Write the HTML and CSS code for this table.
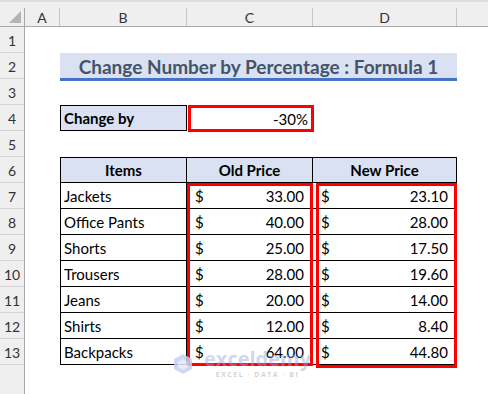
FILE: index.html
```html
<!DOCTYPE html>
<html>
<head>
<meta charset="utf-8">
<link rel="stylesheet" href="styles.css">
</head>
<body>
<div class="app">
  <div class="colheads">
    <div class="corner"><span class="tri"></span></div>
    <div class="ch">A</div>
    <div class="ch">B</div>
    <div class="ch">C</div>
    <div class="ch">D</div>
    <div class="ch last"></div>
  </div>
  <div class="main">
    <div class="rowheads">
      <div class="rh">1</div><div class="rh">2</div><div class="rh">3</div><div class="rh">4</div>
      <div class="rh">5</div><div class="rh">6</div><div class="rh">7</div><div class="rh">8</div>
      <div class="rh">9</div><div class="rh">10</div><div class="rh">11</div><div class="rh">12</div>
      <div class="rh">13</div>
    </div>
    <div class="sheet">
      <div class="title">Change Number by Percentage : Formula 1</div>

      <div class="cell lbl r4">Change by</div>
      <div class="cell pct r4">-30%</div>

      <div class="cell th cb r6 first">Items</div>
      <div class="cell th cc r6">Old Price</div>
      <div class="cell th cd r6">New Price</div>

      <div class="cell cb r7">Jackets</div><div class="cell cc money r7"><span>$</span><span>33.00</span></div><div class="cell cd money r7"><span>$</span><span>23.10</span></div>
      <div class="cell cb r8">Office Pants</div><div class="cell cc money r8"><span>$</span><span>40.00</span></div><div class="cell cd money r8"><span>$</span><span>28.00</span></div>
      <div class="cell cb r9">Shorts</div><div class="cell cc money r9"><span>$</span><span>25.00</span></div><div class="cell cd money r9"><span>$</span><span>17.50</span></div>
      <div class="cell cb r10">Trousers</div><div class="cell cc money r10"><span>$</span><span>28.00</span></div><div class="cell cd money r10"><span>$</span><span>19.60</span></div>
      <div class="cell cb r11">Jeans</div><div class="cell cc money r11"><span>$</span><span>20.00</span></div><div class="cell cd money r11"><span>$</span><span>14.00</span></div>
      <div class="cell cb r12">Shirts</div><div class="cell cc money r12"><span>$</span><span>12.00</span></div><div class="cell cd money r12"><span>$</span><span>8.40</span></div>
      <div class="cell cb r13">Backpacks</div><div class="cell cc money r13"><span>$</span><span>64.00</span></div><div class="cell cd money r13"><span>$</span><span>44.80</span></div>

      <div class="redbox box-c4"></div>
      <div class="redbox box-c"></div>
      <div class="redbox box-d"></div>

      <div class="watermark">
        <svg class="wm-logo" width="22" height="22" viewBox="0 0 22 22">
          <polygon points="11,1 20,6 20,16 11,21 2,16 2,6" fill="#c7d2f0"/>
          <polygon points="11,6 16,9 16,14 11,17 6,14 6,9" fill="#e3e9f8"/>
        </svg>
        <div class="wm-text">
          <div class="wm-name">exceldemy</div>
          <div class="wm-sub">EXCEL · DATA · BI</div>
        </div>
      </div>
    </div>
  </div>
</div>
</body>
</html>
```

FILE: styles.css
```css
* { box-sizing: border-box; }
html, body { margin: 0; padding: 0; background: #ffffff; }
body { font-family: "Lato", "Open Sans", sans-serif; color: #000; }

.app { width: 488px; height: 394px; overflow: hidden; display: flex; flex-direction: column; }

.colheads {
  height: 27px;
  background: #efefef;
  border-top: 2px solid #dcdcdc;
  border-bottom: 1px solid #a8a8a8;
  display: grid;
  grid-template-columns: 25px 35px 127px 126px 144px 1fr;
  flex: none;
}
.corner { position: relative; border-right: 1px solid #a8a8a8; margin-top: 6px; }
.tri {
  position: absolute; right: 3px; bottom: 3px;
  width: 0; height: 0;
  border-left: 12px solid transparent;
  border-bottom: 12px solid #b4b4b4;
}
.ch {
  margin-top: 6px;
  border-right: 1px solid #c6c6c6;
  display: flex; align-items: center; justify-content: center;
  font-size: 14px; color: #333;
}
.ch.last { border-right: none; }

.main { flex: 1; display: flex; }
.rowheads {
  width: 25px; flex: none;
  background: #efefef;
  border-right: 1px solid #a8a8a8;
  display: flex; flex-direction: column;
}
.rh {
  height: 26px;
  border-bottom: 1px solid #d2d2d2;
  display: flex; align-items: center; justify-content: center;
  font-size: 14px; color: #333;
  padding-top: 2px;
}

.sheet {
  flex: 1;
  position: relative;
  display: grid;
  grid-template-columns: 35px 127px 126px 144px 1fr;
  grid-template-rows: repeat(13, 26px) 1fr;
}

.title {
  grid-row: 2; grid-column: 2 / 5;
  background: #d9e1f2;
  border-bottom: 3px solid #4472c4;
  margin-bottom: -2px;
  display: flex; align-items: center; justify-content: center;
  font-weight: 700; font-size: 19px; color: #44546a;
  padding-top: 1px;
}

.cell {
  display: flex; align-items: flex-end;
  font-size: 15px; line-height: 18px;
  padding: 0 3px 3px 3px;
  white-space: nowrap;
}
.r4 { grid-row: 4; }
.r6 { grid-row: 6; } .r7 { grid-row: 7; } .r8 { grid-row: 8; } .r9 { grid-row: 9; }
.r10 { grid-row: 10; } .r11 { grid-row: 11; } .r12 { grid-row: 12; } .r13 { grid-row: 13; }
.cb { grid-column: 2; border-left: 1px solid #000; border-right: 1px solid #000; border-bottom: 1px solid #000; }
.cc { grid-column: 3; border-right: 1px solid #000; border-bottom: 1px solid #000; }
.cd { grid-column: 4; border-right: 1px solid #000; border-bottom: 1px solid #000; }
.r6 { border-top: 1px solid #000; }

.th { background: #d9e1f2; font-weight: 700; justify-content: center; }

.lbl {
  grid-column: 2;
  background: #d9e1f2;
  border: 1px solid #000;
  font-weight: 700;
}
.pct { grid-column: 3; justify-content: flex-end; padding-right: 5px; }

.money { justify-content: space-between; padding-left: 8px; padding-right: 8px; }

.redbox { border: 3px solid #ff0000; pointer-events: none; }
.box-c4 { grid-row: 4; grid-column: 3; margin-left: 1px; margin-right: -1px; margin-bottom: -1px; }
.box-c { grid-row: 7 / 14; grid-column: 3; margin-bottom: -1px; }
.box-d { grid-row: 7 / 14; grid-column: 4; margin-left: 3px; margin-bottom: -3px; }

.watermark {
  position: absolute; left: 147px; top: 321px;
  display: flex; align-items: center; gap: 10px;
  opacity: 0.85;
}
.wm-text { display: flex; flex-direction: column; align-items: center; }
.wm-name { font-family: "Open Sans", sans-serif; font-weight: 700; font-size: 20px; line-height: 21px; color: rgba(150, 170, 225, 0.55); }
.wm-sub { font-family: "Open Sans", sans-serif; font-weight: 700; font-size: 7px; letter-spacing: 1.5px; color: rgba(170, 170, 170, 0.6); margin-top: 1px; }
```
